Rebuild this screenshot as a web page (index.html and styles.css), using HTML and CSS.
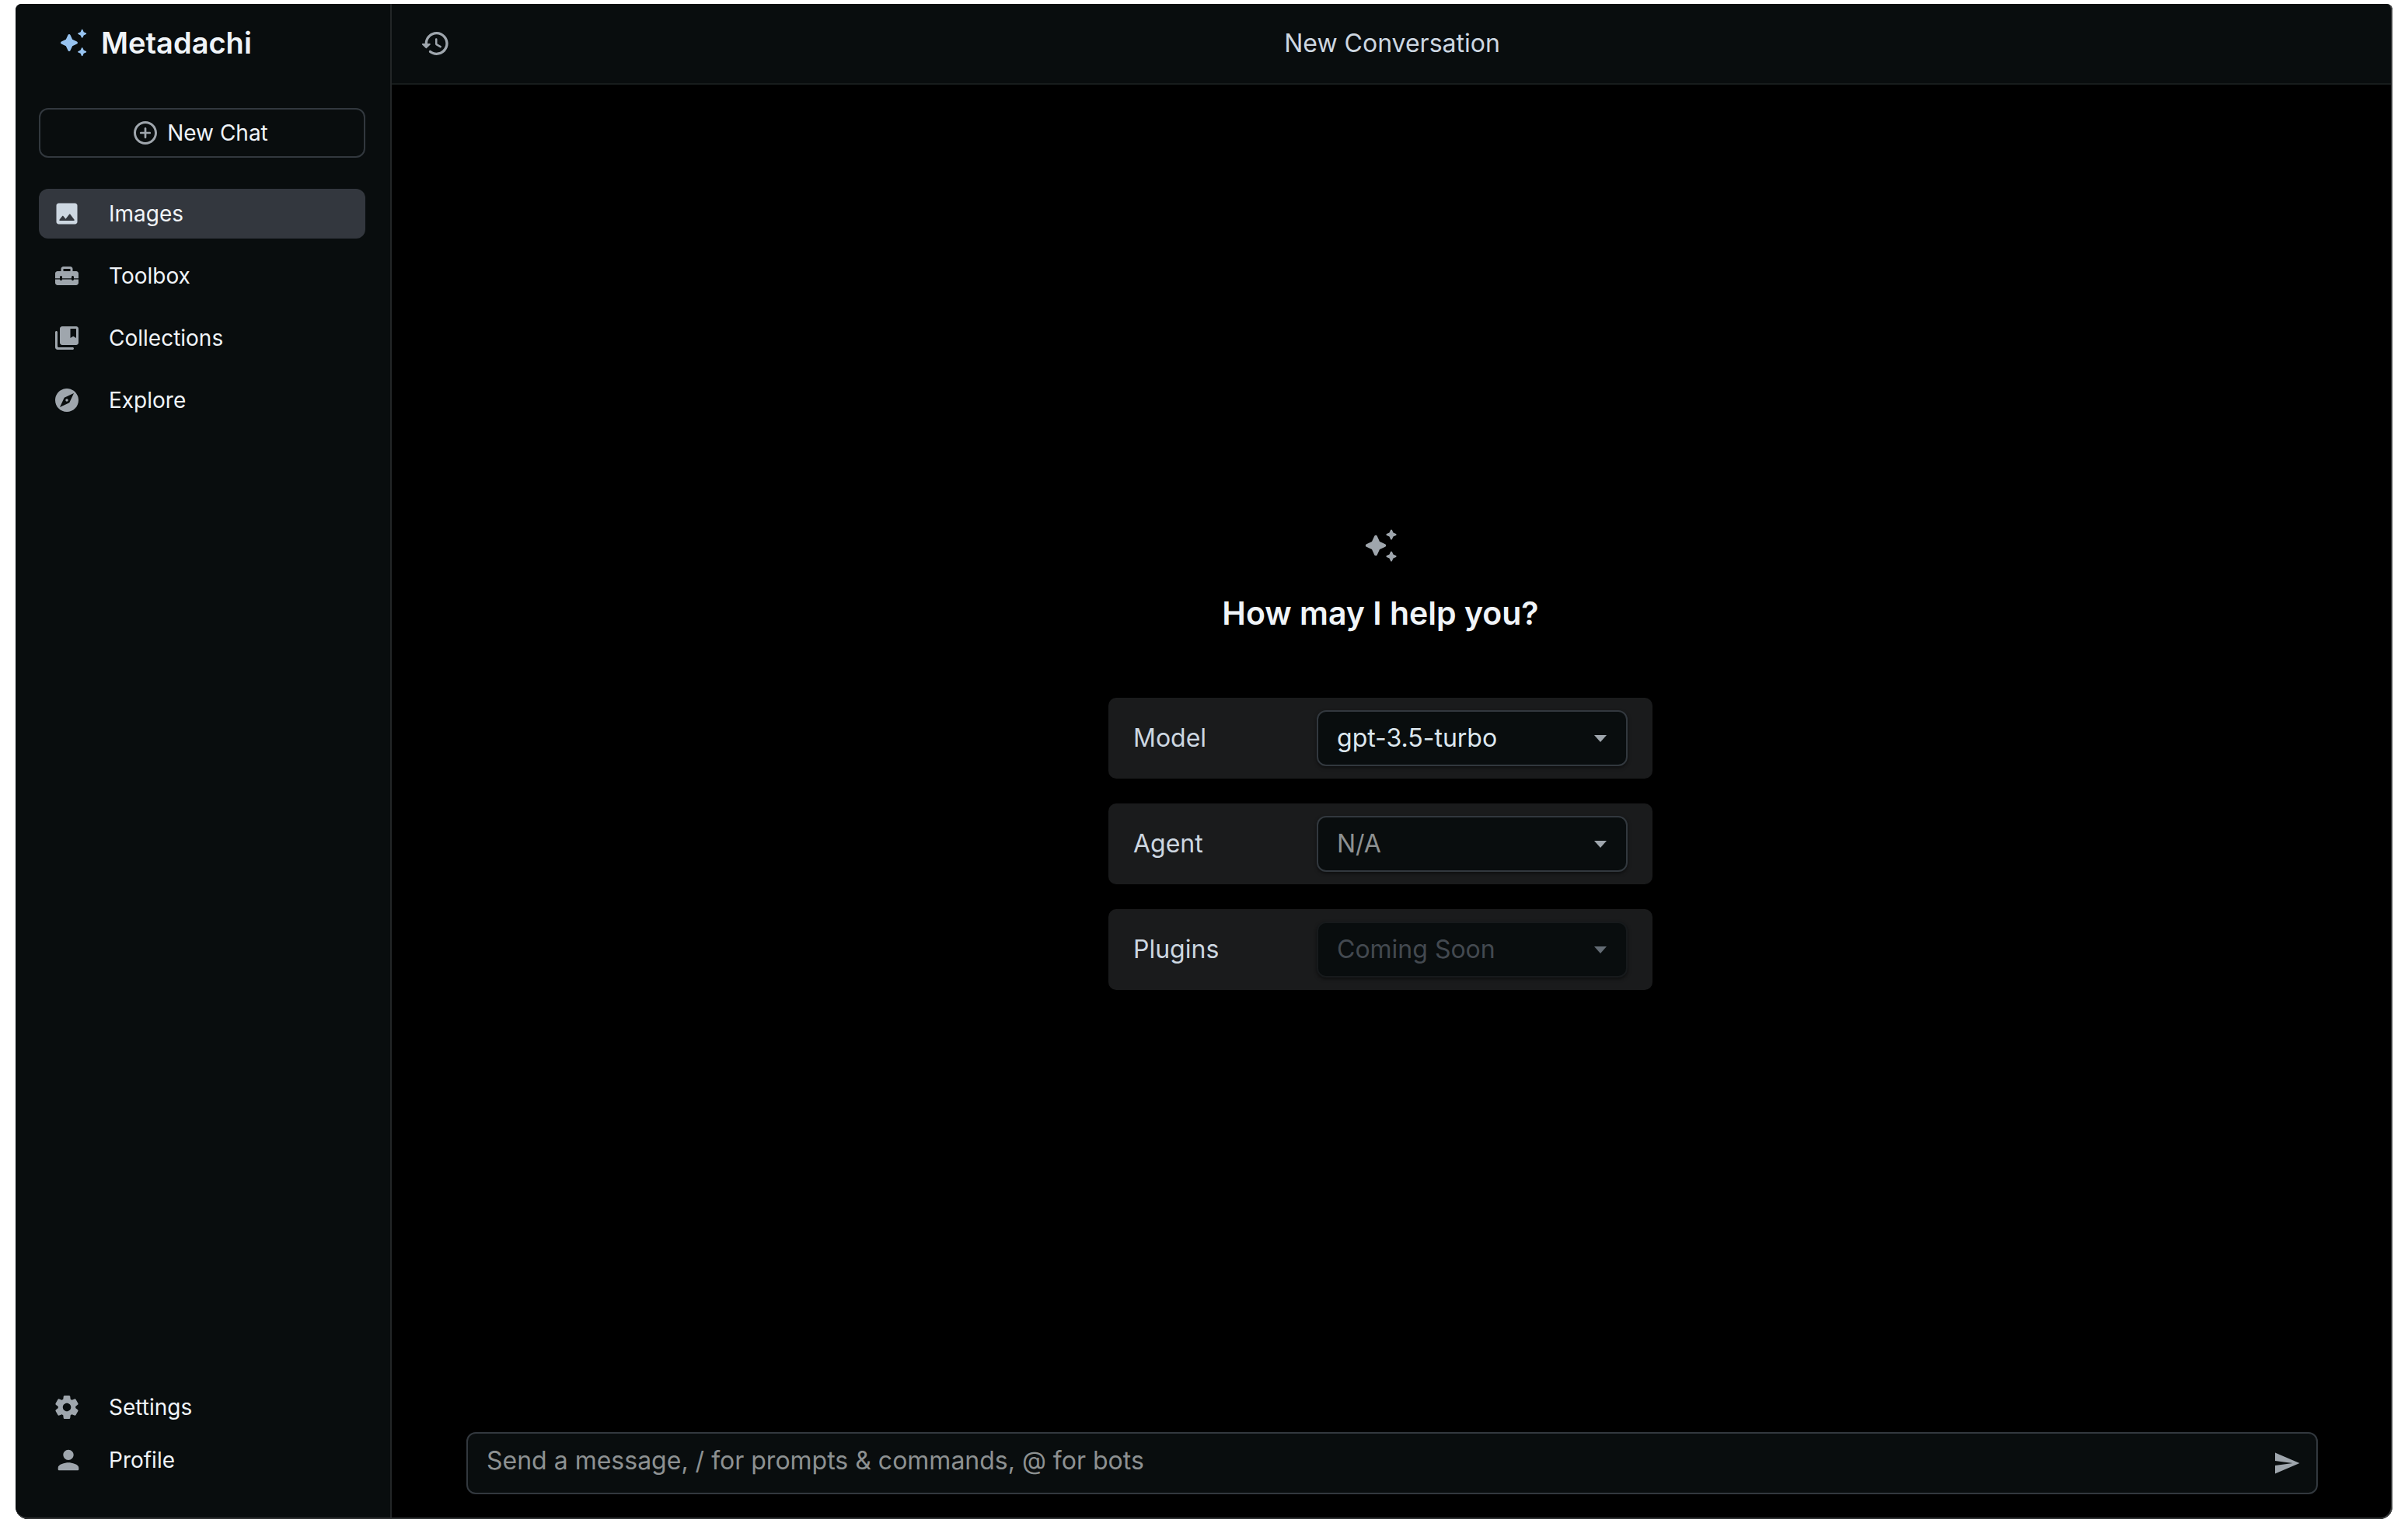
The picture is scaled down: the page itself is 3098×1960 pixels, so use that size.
FILE: index.html
```html
<!DOCTYPE html>
<html lang="en">
<head>
<meta charset="utf-8">
<title>Metadachi</title>
<link rel="stylesheet" href="styles.css">
</head>
<body>
<svg class="sprite" aria-hidden="true">
  <symbol id="sparkles" viewBox="0 0 24 24"><path d="m19.46 8 .79-1.75L22 5.46c.39-.18.39-.73 0-.91l-1.75-.79L19.46 2c-.18-.39-.73-.39-.91 0l-.79 1.75-1.76.79c-.39.18-.39.73 0 .91l1.75.79.79 1.76c.18.39.74.39.92 0zM11.5 9.5 9.91 6c-.35-.78-1.47-.78-1.82 0L6.5 9.5 3 11.09c-.78.36-.78 1.47 0 1.82l3.5 1.59L8.09 18c.36.78 1.47.78 1.82 0l1.59-3.5 3.5-1.59c.78-.36.78-1.47 0-1.82L11.5 9.5zm7.04 6.5-.79 1.75-1.75.79c-.39.18-.39.73 0 .91l1.75.79.79 1.76c.18.39.73.39.91 0l.79-1.75 1.76-.79c.39-.18.39-.73 0-.91l-1.75-.79-.79-1.76c-.18-.39-.74-.39-.92 0z"/></symbol>
  <symbol id="caret" viewBox="0 0 16 9"><path d="M0 0h16L8 9z"/></symbol>
</svg>
<div class="window">
  <aside class="sidebar">
    <div class="brand">
      <svg class="icon icon-lg"><use href="#sparkles"/></svg>
      <span class="brand-name">Metadachi</span>
    </div>
    <button class="new-chat" type="button">
      <svg class="icon" viewBox="0 0 24 24"><path d="M12 7.25c-.5 0-.9.4-.9.9v2.95H8.15c-.5 0-.9.4-.9.9s.4.9.9.9h2.95v2.95c0 .5.4.9.9.9s.9-.4.9-.9V12.9h2.95c.5 0 .9-.4.9-.9s-.4-.9-.9-.9H12.900V8.150c0-.5-.4-.9-.9-.9zM12 2C6.480 2 2 6.480 2 12s4.480 10 10 10 10-4.480 10-10S17.520 2 12 2zm0 18c-4.410 0-8-3.590-8-8s3.590-8 8-8 8 3.590 8 8-3.590 8-8 8z"/></svg>
      <span>New Chat</span>
    </button>
    <nav class="nav" aria-label="Main">
      <a class="nav-item selected" href="#images">
        <svg class="icon" viewBox="0 0 24 24"><path d="M21 19V5c0-1.100-.9-2-2-2H5c-1.100 0-2 .9-2 2v14c0 1.100.9 2 2 2h14c1.100 0 2-.9 2-2zM8.900 13.980l2.100 2.530 3.100-3.990c.2-.26.6-.26.8.01l3.510 4.680c.25.33.01.8-.4.8H6.020c-.42 0-.65-.48-.39-.81L8.120 14c.19-.26.57-.27.78-.02z"/></svg>
        <span>Images</span>
      </a>
      <a class="nav-item" href="#toolbox">
        <svg class="icon" viewBox="0 0 24 24"><path fill-rule="evenodd" d="M20 8h-3V6c0-1.100-.9-2-2-2H9c-1.100 0-2 .9-2 2v2H4c-1.100 0-2 .9-2 2v4.200h4V13c0-.55.45-1 1-1s1 .45 1 1v1.200h8V13c0-.55.45-1 1-1s1 .45 1 1v1.200h4V10c0-1.100-.9-2-2-2zM9 8V6h6v2zM18 15c0 .55-.45 1-1 1s-1-.45-1-1H8c0 .55-.45 1-1 1s-1-.45-1-1H2v3c0 1.100.9 2 2 2h16c1.100 0 2-.9 2-2v-3z"/></svg>
        <span>Toolbox</span>
      </a>
      <a class="nav-item" href="#collections">
        <svg class="icon" viewBox="0 0 24 24"><path d="M3 6c-.55 0-1 .45-1 1v13c0 1.100.9 2 2 2h13c.55 0 1-.45 1-1s-.45-1-1-1H5c-.55 0-1-.45-1-1V7c0-.55-.45-1-1-1zM20 2H8c-1.100 0-2 .9-2 2v12c0 1.100.9 2 2 2h12c1.100 0 2-.9 2-2V4c0-1.100-.9-2-2-2zm0 10-2.500-1.500L15 12V4h5v8z"/></svg>
        <span>Collections</span>
      </a>
      <a class="nav-item" href="#explore">
        <svg class="icon" viewBox="0 0 24 24"><path d="M12 10.900c-.61 0-1.100.49-1.100 1.100s.49 1.100 1.100 1.100 1.100-.49 1.100-1.100-.49-1.100-1.100-1.100zM12 2C6.480 2 2 6.480 2 12s4.480 10 10 10 10-4.480 10-10S17.520 2 12 2zm2.190 12.190L6 18l3.810-8.190L18 6l-3.810 8.190z"/></svg>
        <span>Explore</span>
      </a>
    </nav>
    <nav class="nav nav-account" aria-label="Account">
      <a class="nav-item" href="#settings">
        <svg class="icon" viewBox="0 0 24 24"><path d="M19.500 12c0-.23-.01-.45-.03-.68l1.860-1.410c.4-.3.51-.86.26-1.300l-1.870-3.230c-.25-.44-.79-.62-1.250-.42l-2.150.91c-.37-.26-.76-.49-1.170-.68l-.29-2.310c-.06-.5-.49-.88-.99-.88h-3.730c-.51 0-.94.38-1 .88l-.29 2.310c-.41.19-.8.42-1.170.68l-2.150-.91c-.46-.2-1-.02-1.250.42L2.410 8.620c-.25.44-.14.99.26 1.300l1.860 1.410c-.02.22-.03.44-.03.67s.01.45.03.68l-1.860 1.410c-.4.3-.51.86-.26 1.300l1.870 3.230c.25.44.79.62 1.250.42l2.150-.91c.37.26.76.49 1.170.68l.29 2.310c.06.5.49.88.99.88h3.730c.5 0 .93-.38.99-.88l.29-2.310c.41-.19.8-.42 1.170-.68l2.150.91c.46.2 1 .02 1.250-.42l1.870-3.230c.25-.44.14-.99-.26-1.300l-1.860-1.410c.03-.23.04-.45.04-.68zm-7.460 3.500c-1.930 0-3.500-1.570-3.500-3.500s1.570-3.500 3.500-3.500 3.500 1.570 3.500 3.500-1.570 3.500-3.500 3.500z"/></svg>
        <span>Settings</span>
      </a>
      <a class="nav-item" href="#profile">
        <svg class="icon icon-lg" viewBox="0 0 24 24"><path d="M12 12c2.210 0 4-1.790 4-4s-1.790-4-4-4-4 1.790-4 4 1.790 4 4 4zm0 2c-2.670 0-8 1.340-8 4v1c0 .55.45 1 1 1h14c.55 0 1-.45 1-1v-1c0-2.660-5.330-4-8-4z"/></svg>
        <span>Profile</span>
      </a>
    </nav>
  </aside>
  <main class="main">
    <header class="header">
      <button class="icon-button" type="button" aria-label="History">
        <svg class="icon icon-lg" viewBox="0 0 24 24"><path d="M13.260 3C8.170 2.860 4 6.950 4 12H2.210c-.45 0-.67.54-.35.85l2.790 2.800c.2.2.51.2.71 0l2.790-2.800c.31-.31.09-.85-.36-.85H6c0-3.900 3.180-7.050 7.100-7 3.720.05 6.850 3.180 6.900 6.900.05 3.910-3.100 7.100-7 7.100-1.610 0-3.100-.55-4.280-1.480-.4-.31-.96-.28-1.320.08-.42.42-.39 1.130.08 1.490C9 20.290 10.910 21 13 21c5.050 0 9.140-4.170 9-9.260-.13-4.690-4.050-8.610-8.740-8.740zm-.51 5c-.41 0-.75.34-.75.75v3.680c0 .35.19.68.49.86l3.120 1.850c.36.21.82.09 1.030-.26.21-.36.09-.82-.26-1.030l-2.880-1.710v-3.400c0-.4-.34-.74-.75-.74z"/></svg>
      </button>
      <h1 class="title">New Conversation</h1>
    </header>
    <section class="welcome">
      <svg class="icon icon-xl"><use href="#sparkles"/></svg>
      <h2 class="greeting">How may I help you?</h2>
      <form class="options">
        <div class="option">
          <label for="model">Model</label>
          <div class="select">
            <select id="model"><option>gpt-3.5-turbo</option></select>
            <svg class="caret"><use href="#caret"/></svg>
          </div>
        </div>
        <div class="option">
          <label for="agent">Agent</label>
          <div class="select">
            <select id="agent" class="empty"><option>N/A</option></select>
            <svg class="caret"><use href="#caret"/></svg>
          </div>
        </div>
        <div class="option">
          <label for="plugins">Plugins</label>
          <div class="select disabled">
            <select id="plugins" disabled><option>Coming Soon</option></select>
            <svg class="caret"><use href="#caret"/></svg>
          </div>
        </div>
      </form>
    </section>
    <form class="composer">
      <div class="composer-box">
        <textarea rows="1" aria-label="Message" placeholder="Send a message, / for prompts &amp; commands, @ for bots"></textarea>
        <button class="icon-button" type="button" aria-label="Send">
          <svg class="icon" viewBox="0 0 24 24"><path d="M2.010 21 23 12 2.010 3 2 10l15 2-15 2z"/></svg>
        </button>
      </div>
    </form>
  </main>
</div>
</body>
</html>
```
FILE: styles.css
```css
:root {
  --surface: #090d0e;
  --card: #1a1b1c;
  --outline: #32383e;
  --divider: #232627;
  --text: #f0f4f8;
  --text-soft: #cdd7e1;
  --icon: #9fa6ad;
}

* {
  box-sizing: border-box;
}

body {
  margin: 0;
  padding: 5px 20px;
  height: 100vh;
  background: #fff;
  color: var(--text);
  font-family: Inter, "Liberation Sans", sans-serif;
  font-size: 28px;
  line-height: 40px;
}

button,
select,
textarea {
  font: inherit;
  color: inherit;
}

.sprite {
  display: none;
}

.window {
  position: relative;
  display: flex;
  height: 100%;
  overflow: hidden;
  background: #000;
  border-radius: 8px 8px 16px 16px;
}

.window::after {
  content: "";
  position: absolute;
  inset: 0;
  border: solid #3a3c3d;
  border-width: 0 2px 2px 0;
  border-radius: inherit;
  pointer-events: none;
}

.icon {
  flex: none;
  display: block;
  width: 36px;
  height: 36px;
  fill: var(--icon);
}

.icon-lg {
  width: 40px;
  height: 40px;
}

.icon-xl {
  width: 48px;
  height: 48px;
}

.icon-button {
  padding: 0;
  border: 0;
  background: none;
}

.sidebar {
  flex: none;
  display: flex;
  flex-direction: column;
  width: 484px;
  padding: 0 32px 44px 30px;
  background: var(--surface);
  border-right: 2px solid var(--divider);
}

.brand {
  display: flex;
  align-items: center;
  gap: 16px;
  height: 100px;
  margin-bottom: 34px;
  padding-left: 24px;
}

.brand .icon {
  fill: #97c3f0;
}

.brand-name {
  font-size: 38px;
  font-weight: 600;
}

.new-chat {
  display: flex;
  align-items: center;
  justify-content: center;
  gap: 10px;
  height: 64px;
  margin-bottom: 40px;
  padding: 0 6px 0 0;
  background: none;
  border: 2px solid var(--outline);
  border-radius: 12px;
}

.nav {
  display: flex;
  flex-direction: column;
  gap: 16px;
}

.nav-account {
  gap: 4px;
  margin-top: auto;
}

.nav-item {
  display: grid;
  grid-template-columns: 72px 1fr;
  align-items: center;
  height: 64px;
  padding: 0 18px;
  border-radius: 12px;
  color: inherit;
  text-decoration: none;
}

.selected {
  background: #33373e;
}

.selected .icon {
  fill: var(--text-soft);
}

.main {
  flex: 1;
  display: flex;
  flex-direction: column;
  min-width: 0;
}

.header {
  display: grid;
  grid-template-columns: 40px 1fr 40px;
  align-items: center;
  height: 104px;
  padding: 0 36px;
  background: var(--surface);
  border-bottom: 2px solid #171c1c;
}

.title {
  margin: 0;
  color: var(--text-soft);
  font-size: 32px;
  font-weight: 400;
  text-align: center;
}

.welcome {
  flex: 1;
  display: flex;
  flex-direction: column;
  align-items: center;
  justify-content: center;
  padding-right: 30px;
}

.greeting {
  margin: 34px 0 80px;
  font-size: 41px;
  font-weight: 600;
  line-height: 58px;
}

.options {
  display: flex;
  flex-direction: column;
  gap: 32px;
  width: 700px;
  font-size: 32px;
}

.option {
  display: flex;
  align-items: center;
  justify-content: space-between;
  padding: 16px 32px;
  background: var(--card);
  border-radius: 10px;
  color: var(--text-soft);
}

.select {
  position: relative;
  width: 400px;
}

.select select {
  display: block;
  width: 100%;
  height: 72px;
  padding: 0 56px 0 24px;
  appearance: none;
  background: var(--surface);
  border: 2px solid var(--outline);
  border-radius: 12px;
  box-shadow: 0 2px 4px rgba(0, 0, 0, 0.5);
  color: #dde7ee;
  opacity: 1;
}

.select .empty {
  color: #8d9192;
}

.disabled select {
  border-color: #171a1c;
  color: #434950;
}

.caret {
  position: absolute;
  top: 32px;
  right: 27px;
  width: 16px;
  height: 9px;
  fill: var(--icon);
  pointer-events: none;
}

.disabled .caret {
  fill: #636b74;
}

.composer {
  padding: 0 96px 32px;
}

.composer-box {
  display: flex;
  align-items: center;
  height: 80px;
  padding: 0 20px 0 24px;
  background: var(--surface);
  border: 2px solid var(--outline);
  border-radius: 12px;
}

.composer textarea {
  flex: 1;
  height: 46px;
  padding: 0 0 6px;
  resize: none;
  overflow: hidden;
  background: none;
  border: 0;
  font-size: 32px;
}

.composer textarea::placeholder {
  color: #8d9192;
  opacity: 1;
}
```
